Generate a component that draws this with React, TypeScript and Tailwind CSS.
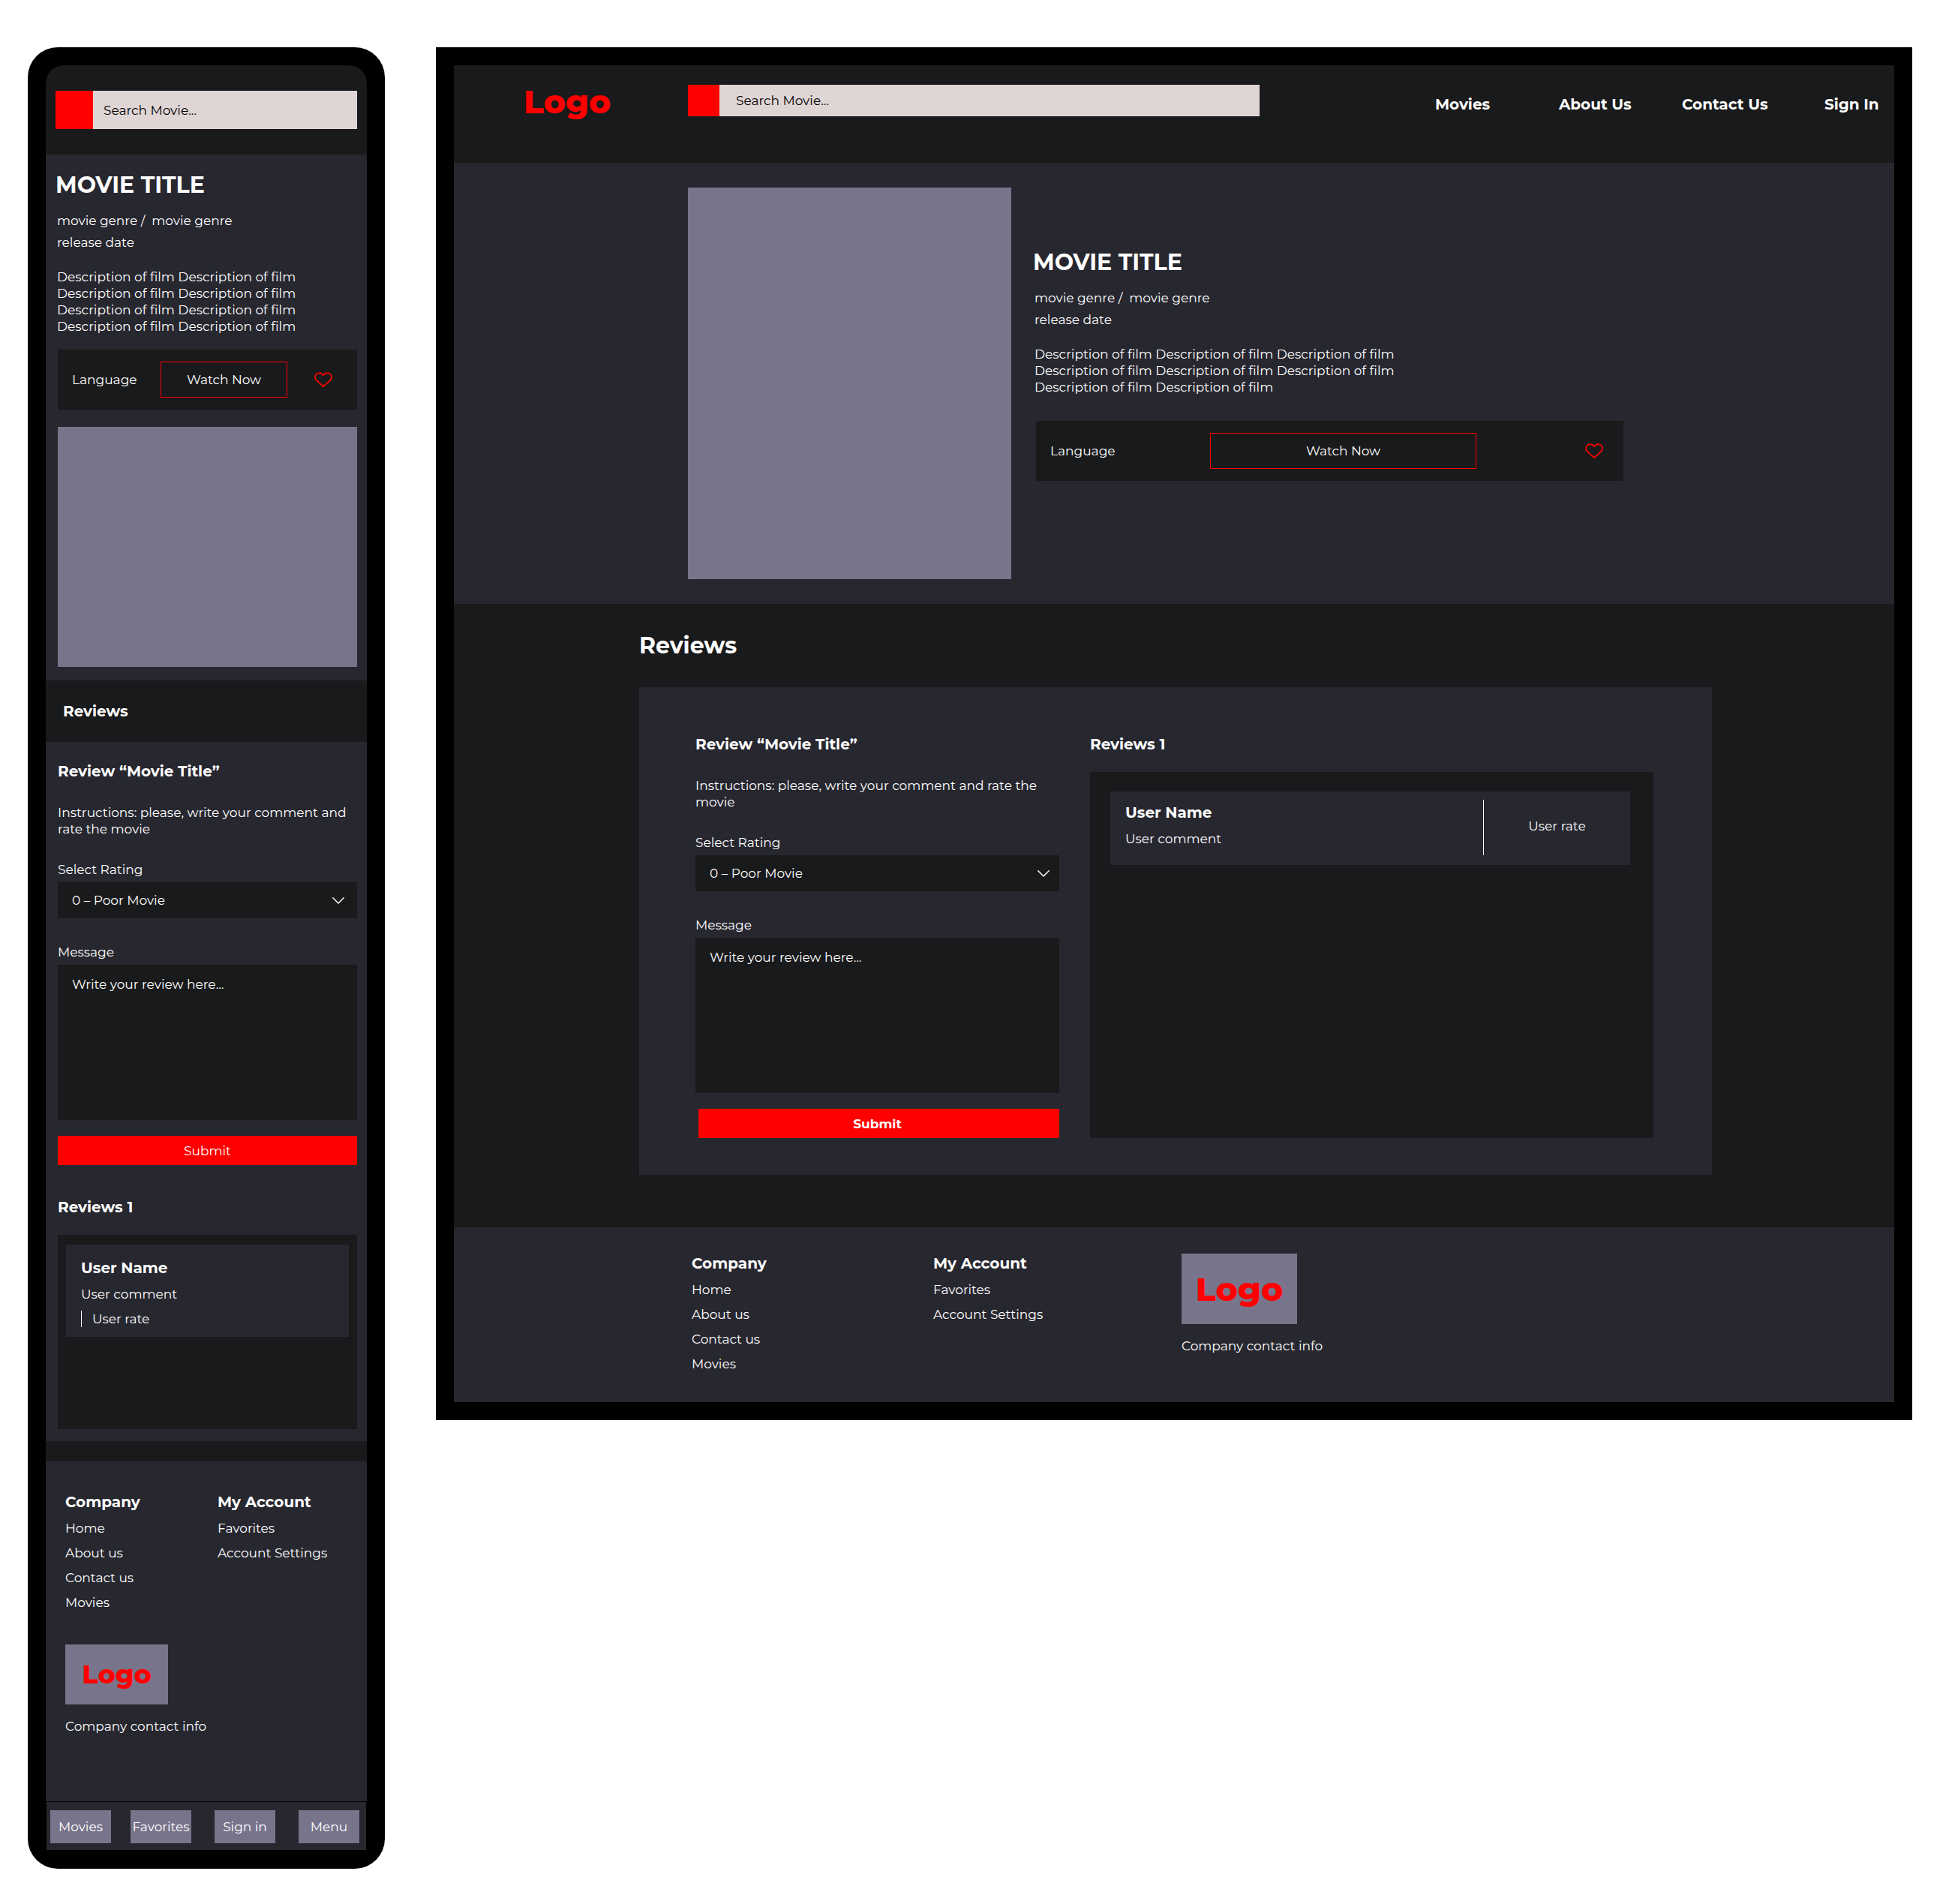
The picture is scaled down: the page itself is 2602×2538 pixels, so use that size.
import { useId } from "react";

type Variant = "phone" | "desktop";

const companyLinks = ["Home", "About us", "Contact us", "Movies"];
const accountLinks = ["Favorites", "Account Settings"];

function HeartIcon() {
  return (
    <svg viewBox="0 0 24 20" className="h-5 w-6" fill="none" stroke="currentColor" strokeWidth="1.75" strokeLinejoin="round">
      <path d="M12 4.300C10.900 2.100 9.100 1 6.800 1 3.500 1 1 3.400 1 6.500c0 2.200.900 3.700 2.600 5.200L12 19l8.400-7.300C22.100 10.200 23 8.700 23 6.500 23 3.400 20.500 1 17.200 1c-2.300 0-4.100 1.100-5.200 3.300Z" />
    </svg>
  );
}

function ChevronIcon() {
  return (
    <svg viewBox="0 0 16 9" className="h-[9px] w-4" fill="none" stroke="currentColor" strokeWidth="1.5" strokeLinecap="round" strokeLinejoin="round">
      <path d="M.8 .8 8 8 15.200 .8" />
    </svg>
  );
}

function SearchBar({ variant }: { variant: Variant }) {
  const phone = variant === "phone";
  return (
    <form className={phone ? "flex h-[51px]" : "flex h-[42px]"} role="search">
      <button type="button" aria-label="Search" className={phone ? "w-[50px] bg-[#ff0000]" : "w-[42px] bg-[#ff0000]"} />
      <input
        type="text"
        aria-label="Search Movie"
        placeholder="Search Movie..."
        className={
          phone
            ? "min-w-0 flex-1 bg-[#dfd5d4] pl-[14px] text-black outline-none placeholder:text-black placeholder:opacity-100"
            : "min-w-0 flex-1 bg-[#dfd5d4] pl-[22px] text-black outline-none placeholder:text-black placeholder:opacity-100"
        }
      />
    </form>
  );
}

function MovieInfo({ copies }: { copies: number }) {
  return (
    <div>
      <h1 className="text-[30px] leading-9 font-bold">MOVIE TITLE</h1>
      <div className="pl-0.5">
        <p className="mt-[18px] whitespace-pre">{"movie genre /  movie genre"}</p>
        <p className="mt-[7px]">release date</p>
        <p className="mt-6">{Array.from({ length: copies }, () => "Description of film").join(" ")}</p>
      </div>
    </div>
  );
}

function ActionBar({ variant }: { variant: Variant }) {
  return (
    <div
      className={
        variant === "phone"
          ? "grid h-20 grid-cols-[137fr_169fr_93fr] items-center bg-[#191a1b]"
          : "grid h-20 grid-cols-[232fr_355fr_196fr] items-center bg-[#191a1b]"
      }
    >
      <span className="pl-[19px]">Language</span>
      <button type="button" className="h-12 border border-[#ff0000]">Watch Now</button>
      <button
        type="button"
        aria-label="Add to favorites"
        className={variant === "phone" ? "mr-[33px] justify-self-end text-[#ff0000]" : "mr-[27px] justify-self-end text-[#ff0000]"}
      >
        <HeartIcon />
      </button>
    </div>
  );
}

function ReviewForm({ variant }: { variant: Variant }) {
  const id = useId();
  return (
    <form className="flex flex-col">
      <h3 className="text-xl leading-6 font-bold">Review “Movie Title”</h3>
      <p className="mt-8">Instructions: please, write your comment and rate the movie</p>
      <label htmlFor={`${id}-rating`} className="mt-8">Select Rating</label>
      <div className="mt-[6px] grid items-center">
        <select id={`${id}-rating`} className="col-start-1 row-start-1 h-12 w-full appearance-none bg-[#191a1b] pl-[19px] outline-none">
          <option>0 – Poor Movie</option>
        </select>
        <span
          className={
            variant === "phone"
              ? "pointer-events-none col-start-1 row-start-1 mr-[17px] justify-self-end"
              : "pointer-events-none col-start-1 row-start-1 mr-[13px] justify-self-end"
          }
        >
          <ChevronIcon />
        </span>
      </div>
      <label htmlFor={`${id}-message`} className="mt-[34px]">Message</label>
      <textarea
        id={`${id}-message`}
        placeholder="Write your review here..."
        className="mt-[6px] h-[207px] resize-none bg-[#191a1b] pt-[15px] pl-[19px] outline-none placeholder:text-white placeholder:opacity-100"
      />
      <button
        type="button"
        className={variant === "phone" ? "mt-[21px] h-[39px] bg-[#ff0000]" : "mt-[21px] ml-1 h-[39px] bg-[#ff0000] pr-1 font-bold"}
      >
        Submit
      </button>
    </form>
  );
}

function LinkColumn({ title, links }: { title: string; links: string[] }) {
  return (
    <nav aria-label={title} className="pt-px">
      <h4 className="text-xl leading-6 font-bold">{title}</h4>
      <ul className="mt-3 flex flex-col gap-[11px]">
        {links.map((link) => (
          <li key={link}>
            <a href="#">{link}</a>
          </li>
        ))}
      </ul>
    </nav>
  );
}

function Phone() {
  return (
    <div className="rounded-[40px] bg-black px-6 pt-6 pb-[25px]">
      <div className="overflow-hidden rounded-t-3xl bg-[#191a1b]">
        <header className="px-[13px] py-[34px]">
          <SearchBar variant="phone" />
        </header>
        <section className="bg-[#27272f] pt-[23px] pr-[13px] pb-[18px]">
          <div className="pr-16 pl-[13px]">
            <MovieInfo copies={8} />
          </div>
          <div className="mt-5 pl-4">
            <ActionBar variant="phone" />
            <div className="mt-[23px] h-80 bg-[#78748b]" />
          </div>
        </section>
        <h2 className="py-[29px] pl-[23px] text-xl leading-6 font-bold">Reviews</h2>
        <section className="bg-[#27272f] pt-[27px] pr-[13px] pb-4 pl-4">
          <ReviewForm variant="phone" />
          <h3 className="mt-11 text-xl leading-6 font-bold">Reviews 1</h3>
          <div className="mt-[25px] min-h-[259px] bg-[#191a1b] px-[11px] pt-[13px]">
            <article className="bg-[#27272f] pt-[19px] pb-[13px] pl-5">
              <h4 className="text-xl leading-6 font-bold">User Name</h4>
              <p className="mt-3">User comment</p>
              <p className="mt-[11px] border-l border-white pl-[14px]">User rate</p>
            </article>
          </div>
        </section>
        <footer className="mt-[27px] bg-[#27272f] px-[26px] pt-[41px] pb-[89px]">
          <div className="grid grid-cols-[203fr_173fr]">
            <LinkColumn title="Company" links={companyLinks} />
            <LinkColumn title="My Account" links={accountLinks} />
          </div>
          <div className="mt-[45px] flex h-20 w-[137px] items-center justify-center bg-[#78748b] text-[35px] font-extrabold text-[#ff0000]">Logo</div>
          <p className="mt-[18px]">Company contact info</p>
        </footer>
      </div>
      <nav aria-label="Main" className="mx-px mt-px grid grid-cols-[107fr_112fr_112fr_81fr] bg-[#27272f] pt-[11px] pr-[9px] pb-[9px] pl-[5px]">
        {["Movies", "Favorites", "Sign in", "Menu"].map((item) => (
          <button key={item} type="button" className="h-11 w-[81px] bg-[#78748b]">
            {item}
          </button>
        ))}
      </nav>
    </div>
  );
}

function Desktop() {
  return (
    <div className="bg-black p-6">
      <div className="bg-[#191a1b]">
        <header className="grid h-[130px] grid-cols-[312fr_762fr_846fr] items-start">
          <a href="#" className="pt-[22px] pl-[93px] text-[44px] leading-[52px] font-extrabold text-[#ff0000]">Logo</a>
          <div className="pt-[26px]">
            <SearchBar variant="desktop" />
          </div>
          <nav aria-label="Site" className="grid grid-cols-[165fr_164fr_190fr_93fr] pt-10 pl-[234px] text-xl leading-6 font-bold whitespace-nowrap">
            <a href="#">Movies</a>
            <a href="#">About Us</a>
            <a href="#">Contact Us</a>
            <a href="#">Sign In</a>
          </nav>
        </header>
        <section className="grid grid-cols-[312fr_431fr_816fr_361fr] bg-[#27272f] py-[33px]">
          <div className="col-start-2 h-[522px] bg-[#78748b]" />
          <div className="pt-[82px]">
            <div className="max-w-[540px] pl-[29px]">
              <MovieInfo copies={8} />
            </div>
            <div className="mt-[34px] pl-[33px]">
              <ActionBar variant="desktop" />
            </div>
          </div>
        </section>
        <section className="grid grid-cols-[247fr_1430fr_243fr] pt-[38px] pb-[70px]">
          <h2 className="col-start-2 text-[30px] leading-9 font-bold">Reviews</h2>
          <div className="col-start-2 mt-[37px] grid grid-cols-[485fr_751fr] gap-x-[41px] bg-[#27272f] pt-16 pr-[78px] pb-[49px] pl-[75px]">
            <ReviewForm variant="desktop" />
            <div className="flex flex-col">
              <h3 className="text-xl leading-6 font-bold">Reviews 1</h3>
              <div className="mt-[25px] flex-1 bg-[#191a1b] pt-[26px] pr-[31px] pl-[27px]">
                <article className="grid h-[98px] grid-cols-[497fr_196fr] bg-[#27272f]">
                  <div className="pt-4 pl-5">
                    <h4 className="text-xl leading-6 font-bold">User Name</h4>
                    <p className="mt-3">User comment</p>
                  </div>
                  <p className="mt-[11px] mb-[13px] flex items-center justify-center border-l border-white pb-1">User rate</p>
                </article>
              </div>
            </div>
          </div>
        </section>
        <footer className="grid h-[233px] grid-cols-[317fr_322fr_331fr_950fr] bg-[#27272f] pt-[35px]">
          <div className="col-start-2">
            <LinkColumn title="Company" links={companyLinks} />
          </div>
          <LinkColumn title="My Account" links={accountLinks} />
          <div>
            <div className="flex h-[94px] w-[154px] items-center justify-center bg-[#78748b] text-[44px] font-extrabold text-[#ff0000]">Logo</div>
            <p className="mt-[18px]">Company contact info</p>
          </div>
        </footer>
      </div>
    </div>
  );
}

export default function App() {
  return (
    <main className="grid grid-cols-[476fr_1968fr] items-start gap-x-[68px] bg-white pt-[63px] pr-[53px] pb-[47px] pl-[37px] font-['Montserrat','Inter',sans-serif] text-[17px] leading-[22px] text-white">
      <Phone />
      <Desktop />
    </main>
  );
}
